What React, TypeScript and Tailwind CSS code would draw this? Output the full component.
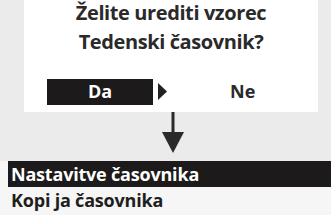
import React from 'react';

export default function App() {
  return (
    <div
      className="w-[331px] h-[215px] overflow-hidden bg-[#ebebeb] flex flex-col"
      style={{ fontFamily: '"Open Sans", "Noto Sans", sans-serif' }}
    >
      {/* dialog panel */}
      <div className="ml-[24px] w-[294px] h-[112px] bg-white flex flex-col items-center shrink-0">
        <div className="mt-[2px] text-[20px] leading-[22px] font-bold text-[#2a2a2a] text-center tracking-[-0.4px]">
          <div>Želite urediti vzorec</div>
          <div className="mt-[7px]">Tedenski časovnik?</div>
        </div>
        <div className="mt-[25px] w-full flex items-center">
          <div className="ml-[23px] w-[106px] h-[26px] bg-[#1c1a1a] flex items-center justify-center text-white text-[18px] font-bold">
            Da
          </div>
          <svg width="10" height="17" viewBox="0 0 10 17" className="ml-[5px]">
            <polygon points="0,0 9,8.5 0,17" fill="#222" />
          </svg>
          <div className="ml-[62px] text-[18px] font-bold text-[#2a2a2a]">Ne</div>
        </div>
      </div>

      {/* arrow */}
      <div className="flex justify-center h-[49px] shrink-0 pl-[14px]">
        <svg width="24" height="42" viewBox="0 0 24 42">
          <rect x="10.5" y="0" width="3" height="22" fill="#2a2a2a" />
          <polygon points="1,20 23,20 12,41" fill="#2a2a2a" />
        </svg>
      </div>

      {/* menu */}
      <div className="flex-1 bg-[#f6f6f6] pl-[8px]">
        <div className="h-[26px] bg-[#1c1a1a] text-white text-[18px] font-bold leading-[26px] pl-[3px] tracking-[-0.2px]">
          Nastavitve časovnika
        </div>
        <div className="h-[27px] text-[#1e1e1e] text-[18px] font-bold leading-[27px] pl-[3px] tracking-[-0.2px]">
          Kopi ja časovnika
        </div>
      </div>
    </div>
  );
}
